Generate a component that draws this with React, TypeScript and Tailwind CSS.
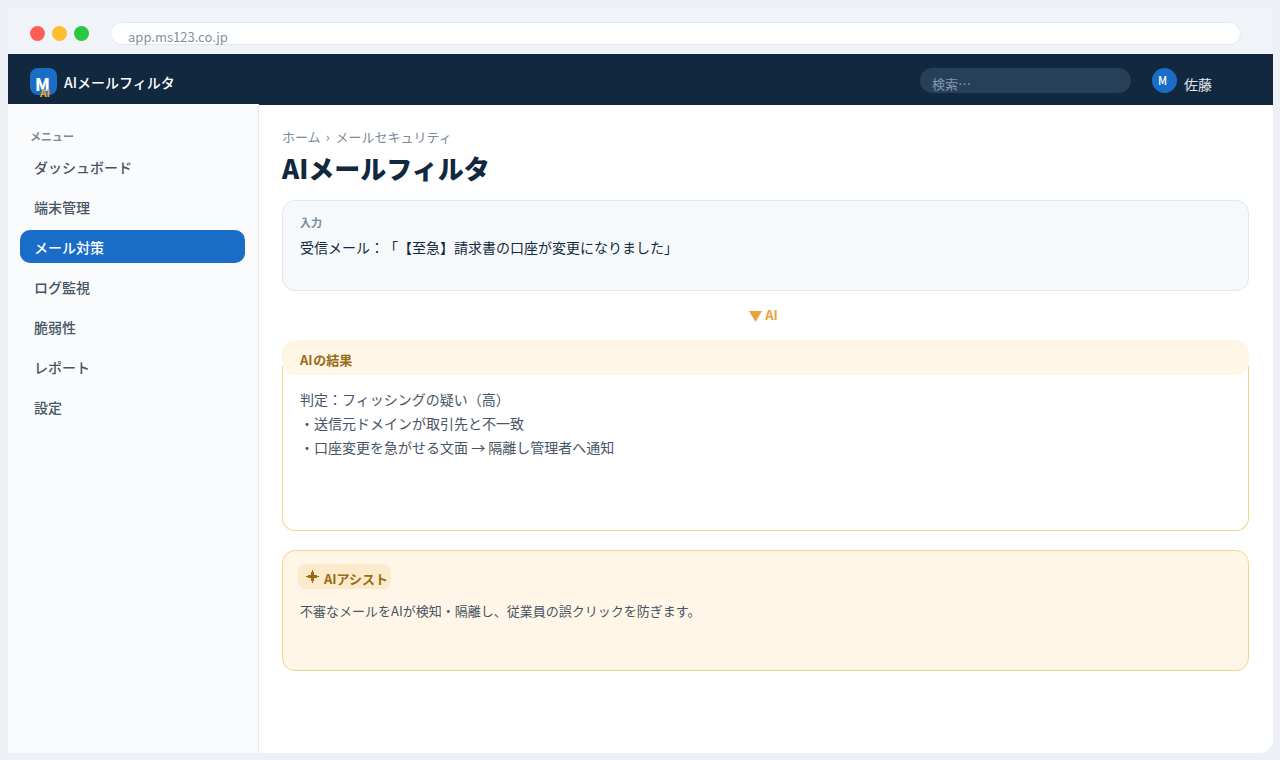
import clsx from 'clsx';

const navigation = [
  { name: 'ダッシュボード', active: false },
  { name: '端末管理', active: false },
  { name: 'メール対策', active: true },
  { name: 'ログ監視', active: false },
  { name: '脆弱性', active: false },
  { name: 'レポート', active: false },
  { name: '設定', active: false },
];

const results = [
  '判定：フィッシングの疑い（高）',
  '・送信元ドメインが取引先と不一致',
  '・口座変更を急がせる文面 → 隔離し管理者へ通知',
];

function TitleBar() {
  return (
    <div className="flex h-[46px] items-center bg-[#f0f3f8] pr-8 pl-[22px]">
      <div className="mt-1 flex gap-[7px]">
        <span className="size-[15px] rounded-full bg-[#ff5f57]" />
        <span className="size-[15px] rounded-full bg-[#febc2e]" />
        <span className="size-[15px] rounded-full bg-[#28c840]" />
      </div>
      <div className="mt-1 ml-[21px] h-[23px] flex-1 rounded-full border border-[#e2e8f0] bg-white pl-[17px] text-[13px] leading-[28px] text-[#8291a0]">
        app.ms123.co.jp
      </div>
    </div>
  );
}

function Header() {
  return (
    <header className="flex h-[50px] items-start bg-[#12283e] pt-3.5 pl-[22px] text-white">
      <div className="relative size-[27px] rounded-lg bg-[#1a6dc7]">
        <span className="absolute top-[5px] left-[5px] text-[17px] leading-[22px] font-black">M</span>
        <span className="absolute top-[18px] left-[10px] text-[10px] leading-[14px] font-black text-[#e8a33d]">
          AI
        </span>
      </div>
      <span className="mt-1 ml-[7px] text-[14px] leading-5 font-medium">AIメールフィルタ</span>
      <div className="ml-auto h-[25px] w-[211px] rounded-full bg-[#27405a] pl-3 text-[13px] leading-[32px] text-[#8298ae]">
        検索…
      </div>
      <div className="ml-[21px] size-[25px] rounded-full bg-[#1a6dc7] pl-1.5 text-[11px] leading-[25px] font-medium">
        M
      </div>
      <span className="mt-1.5 mr-[61px] ml-[7px] text-[14px] leading-5 text-[#e2e8f0]">佐藤</span>
    </header>
  );
}

function Sidebar() {
  return (
    <aside className="w-[251px] border-r border-[#e0e8f0] bg-[#fafbfd] pr-[13px] pl-3">
      <p className="mt-6 pl-2.5 text-[11px] leading-4 font-bold text-[#7a8998]">メニュー</p>
      <nav className="mt-1.5 space-y-[7px]">
        {navigation.map((item) => (
          <a
            key={item.name}
            className={clsx(
              'block h-[33px] rounded-[10px] pl-3.5 text-[14px] leading-[34px] font-medium',
              item.active ? 'bg-[#1a6dc7] text-white' : 'text-[#475463]'
            )}
          >
            {item.name}
          </a>
        ))}
      </nav>
    </aside>
  );
}

export default function App() {
  return (
    <div className="h-[760px] w-[1280px] overflow-hidden bg-[#edf1f6] pt-2 pl-2 font-['Noto_Sans_CJK_JP',sans-serif] [text-spacing-trim:space-all]">
      <div className="flex h-[745px] w-[1265px] flex-col overflow-hidden rounded-br-[14px] bg-white">
        <TitleBar />
        <Header />
        <div className="flex flex-1">
          <Sidebar />
          <main className="flex-1 border-t border-[#12283e] pr-6 pl-[23px]">
            <div className="mt-[22px] text-[13px] leading-5 text-[#7a8998]">
              ホーム<span className="mr-1.5 ml-[5px]">›</span>メールセキュリティ
            </div>
            <h1 className="mt-1 text-[26px] leading-[34px] font-black text-[#12283e]">AIメールフィルタ</h1>

            {/* Input */}
            <section className="mt-[15px] h-[91px] rounded-[13px] border border-[#dfe7ef] bg-[#f5f9fc] px-[17px] pt-[13px]">
              <h2 className="text-[11px] leading-4 font-bold text-[#7a8998]">入力</h2>
              <p className="mt-[5px] text-[14px] leading-6 text-[#12283e]">
                受信メール：「【至急】請求書の口座が変更になりました」
              </p>
            </section>

            <div className="mt-3.5 flex h-5 items-center justify-center gap-[3px] pr-1 text-[13px] leading-5 font-bold text-[#e8a33d]">
              <svg width="13" height="11" viewBox="0 0 13 11" className="mt-[3px]" fill="currentColor">
                <path d="M0 0H13L6.5 11Z" />
              </svg>
              AI
            </div>

            {/* Result */}
            <section className="mt-[15px] h-[191px]">
              <div className="relative z-10 h-[35px] rounded-[13px] bg-[#fff6e8] pl-[18px] text-[13px] leading-[39px] font-bold text-[#996b14]">
                <span className="mr-[0.5px]">AI</span>の結果
              </div>
              <div className="-mt-[9px] h-[165px] rounded-b-[13px] border border-t-0 border-[#f0d68c] px-[17px] pt-[21px] text-[14px] leading-6 text-[#475463]">
                {results.map((line) => (
                  <p key={line}>{line}</p>
                ))}
              </div>
            </section>

            {/* Assist */}
            <section className="mt-[19px] h-[121px] rounded-[13px] border border-[#f0d68c] bg-[#fff6e8] px-[15px] pt-[13px]">
              <div className="flex h-[25px] w-[93px] items-start rounded-lg bg-[#fbebcb] pl-2 text-[13px] leading-[29px] font-bold whitespace-nowrap text-[#996b14]">
                <svg width="13" height="13" viewBox="0 0 13 13" className="mt-1.5 mr-[5px] shrink-0" fill="currentColor">
                  <path d="M6 0H7V2H8V5H11V6H13V7H11V8H8V11H7V13H6V11H5V8H2V7H0V6H2V5H5V2H6Z" />
                </svg>
                AIアシスト
              </div>
              <p className="mt-3 pl-0.5 text-[13px] leading-5 text-[#475463]">
                不審なメールをAIが検知・隔離し、従業員の誤クリックを防ぎます。
              </p>
            </section>
          </main>
        </div>
      </div>
    </div>
  );
}
